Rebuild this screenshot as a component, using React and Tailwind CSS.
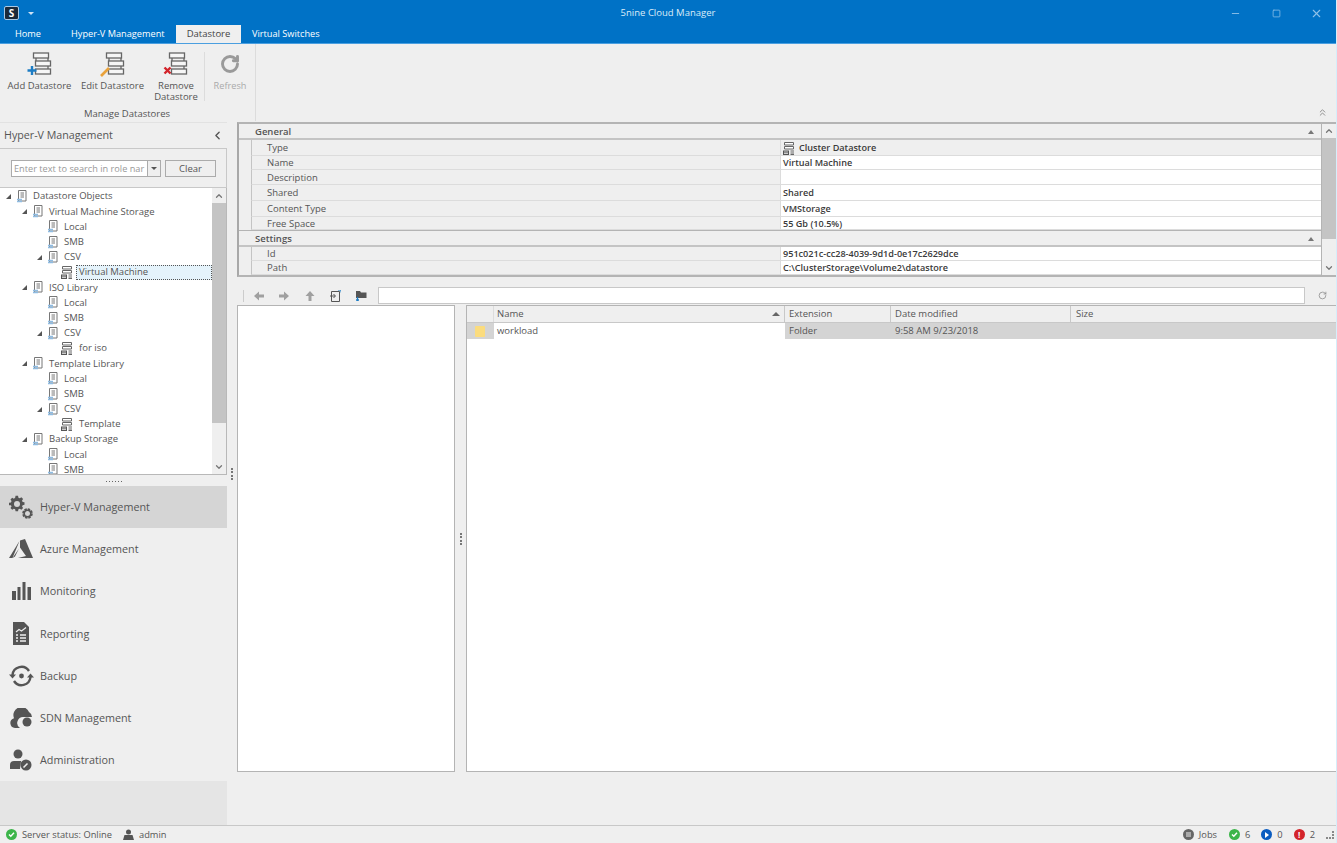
import { ChevronLeft, ChevronUp, ChevronDown, Minus, Square, X, RotateCw, ChevronsUp } from "lucide-react";

const ribbonButtons = [
    { label: "Add Datastore", width: "w-[71px]", mark: "add" },
    { label: "Edit Datastore", width: "w-[75px]", mark: "edit" },
    { label: "Remove Datastore", width: "w-[52px]", mark: "remove" },
];

const treeRows = [
    { level: 0, text: "Datastore Objects", arrow: true },
    { level: 1, text: "Virtual Machine Storage", arrow: true },
    { level: 2, text: "Local" },
    { level: 2, text: "SMB" },
    { level: 2, text: "CSV", arrow: true },
    { level: 3, text: "Virtual Machine", cluster: true, selected: true },
    { level: 1, text: "ISO Library", arrow: true },
    { level: 2, text: "Local" },
    { level: 2, text: "SMB" },
    { level: 2, text: "CSV", arrow: true },
    { level: 3, text: "for iso", cluster: true },
    { level: 1, text: "Template Library", arrow: true },
    { level: 2, text: "Local" },
    { level: 2, text: "SMB" },
    { level: 2, text: "CSV", arrow: true },
    { level: 3, text: "Template", cluster: true },
    { level: 1, text: "Backup Storage", arrow: true },
    { level: 2, text: "Local" },
    { level: 2, text: "SMB" },
];

const levelPad = ["pl-[6px]", "pl-[22px]", "pl-[37px]", "pl-[36px]"];

const navItems = [
    { label: "Hyper-V Management", icon: GearsIcon, active: true },
    { label: "Azure Management", icon: AzureIcon },
    { label: "Monitoring", icon: BarsIcon },
    { label: "Reporting", icon: ReportIcon },
    { label: "Backup", icon: BackupIcon },
    { label: "SDN Management", icon: CloudIcon },
    { label: "Administration", icon: AdminIcon },
];

const generalRows = [
    { name: "Type", value: "Cluster Datastore", grey: true, h: "h-[16px]" },
    { name: "Name", value: "Virtual Machine", h: "h-[14px]" },
    { name: "Description", value: "", h: "h-[15px]" },
    { name: "Shared", value: "Shared", h: "h-[16px]" },
    { name: "Content Type", value: "VMStorage", h: "h-[16px]" },
    { name: "Free Space", value: "55 Gb (10.5%)", h: "h-[13px]" },
];

const settingsRows = [
    { name: "Id", value: "951c021c-cc28-4039-9d1d-0e17c2629dce", h: "h-[14px]" },
    { name: "Path", value: "C:\\ClusterStorage\\Volume2\\datastore", h: "h-[14px]" },
];

function GearsIcon() {
    return (
        <svg width="24" height="24" viewBox="0 0 24 24" fill="#555">
            <path d="M8 1h3l.5 2.300 1.600.7 2-1.300 2.100 2.100-1.300 2 .7 1.600 2.300.5v3l-2.300.5-.7 1.600 1.300 2-2.100 2.100-2-1.300-1.600.7-.5 2.300H8l-.5-2.300-1.600-.7-2 1.300-2.100-2.100 1.300-2-.7-1.600L0 12.500v-3l2.400-.5.7-1.600-1.300-2 2.100-2.100 2 1.300L7.500 3.300z" transform="scale(.82)" />
            <circle cx="8" cy="9" r="3" fill="#d5d5d5" />
            <circle cx="18.500" cy="18.500" r="4" fill="none" stroke="#555" strokeWidth="2.600" strokeDasharray="2.200 .9" />
            <circle cx="18.500" cy="18.500" r="3.300" fill="none" stroke="#555" strokeWidth="1.600" />
        </svg>
    );
}

function AzureIcon() {
    return (
        <svg width="24" height="20" viewBox="0 0 24 20" fill="#555">
            <path d="M11 1.500 16 0 24 19H9l8-2-6-8.500z" />
            <path d="M10.500 2 3.500 19H0z" />
            <path d="M10 9.500 6 17.500l-2.500 1.500z" />
        </svg>
    );
}

function BarsIcon() {
    return (
        <svg width="19" height="18" viewBox="0 0 19 18" fill="#555">
            <rect x="0" y="9" width="4" height="9" />
            <rect x="5.500" y="5" width="3" height="13" />
            <rect x="10.500" y="0" width="3" height="18" />
            <rect x="15.500" y="5" width="3.500" height="13" />
        </svg>
    );
}

function ReportIcon() {
    return (
        <svg width="16" height="23" viewBox="0 0 16 23">
            <path d="M0 0h11l5 5v18H0z" fill="#555" />
            <path d="M3 10l3-2.500 2.500 1.500L13 5.500" fill="none" stroke="#efefef" strokeWidth="1.200" />
            <path d="M3 13h2M7 13h6M3 16h2M7 16h6M3 19h2M7 19h6" stroke="#efefef" strokeWidth="1.300" />
        </svg>
    );
}

function BackupIcon() {
    return (
        <svg width="25" height="22" viewBox="0 0 25 22" fill="none" stroke="#555" strokeWidth="2.400">
            <path d="M3.500 10a9 9 0 0 1 16.500-4" />
            <path d="M21.500 12a9 9 0 0 1-16.500 4" />
            <path d="M0 9.500h7L3.500 13.500z" fill="#555" stroke="none" />
            <path d="M18 12.500h7L21.500 8.500z" fill="#555" stroke="none" />
            <circle cx="12.500" cy="11" r="2.400" fill="#555" stroke="none" />
        </svg>
    );
}

function CloudIcon() {
    return (
        <svg width="23" height="20" viewBox="0 0 23 20">
            <path d="M5 20a5 5 0 0 1-1-9.800A8 8 0 0 1 19 4a6 6 0 0 1 3 5H14a6 6 0 0 0-4 11z" fill="#555" />
            <circle cx="17" cy="14" r="4.500" fill="#555" />
        </svg>
    );
}

function AdminIcon() {
    return (
        <svg width="22" height="22" viewBox="0 0 22 22">
            <circle cx="8" cy="5" r="4.500" fill="#555" />
            <path d="M0 20v-4a4 4 0 0 1 4-4h7l-1 8z" fill="#555" />
            <circle cx="16" cy="16" r="5.500" fill="#555" />
            <path d="M13.500 18.500l4-4" stroke="#efefef" strokeWidth="1.600" />
        </svg>
    );
}

function DocIcon() {
    return (
        <svg width="11" height="13" viewBox="0 0 11 13" className="shrink-0">
            <path d="M2.500 .5h7.500v10.500H2.500z" fill="#fff" stroke="#777" />
            <path d="M4.500 3h3.500M4.500 5h3.500M4.500 7h3.500" stroke="#777" />
            <path d="M1 9.500h5M1 11.500h5" stroke="#8fbce2" strokeWidth="1.400" />
        </svg>
    );
}

function ClusterIcon() {
    return (
        <svg width="12" height="13" viewBox="0 0 12 13" className="shrink-0">
            <path d="M1.500 .5h9v2.500h-9zM1.500 4.500h9V7h-9z" fill="#fff" stroke="#666" />
            <rect x="0" y="8.500" width="6" height="4.500" fill="#555" />
            <path d="M1 10h4M1 11.500h4" stroke="#ccc" />
            <path d="M7.500 9h3.500M7.500 11h3.500M7.500 12.500h3.500" stroke="#666" />
        </svg>
    );
}

function DatastoreIcon({ mark }) {
    return (
        <svg width="26" height="26" viewBox="0 0 26 26">
            <g fill="#f6f6f6" stroke="#666" strokeWidth="1.300">
                <rect x="6.500" y="1" width="15" height="5" />
                <rect x="8.500" y="9" width="15" height="5" />
                <rect x="8.500" y="17" width="15" height="5" />
            </g>
            <path d="M9 6v3M21 6v3M21 14v3" stroke="#666" strokeWidth="1.300" />
            {mark === "add" && <path d="M5 14v9M.5 18.500h9" stroke="#1c7cc4" strokeWidth="2.400" />}
            {mark === "edit" && <path d="M1 24l8-8" stroke="#e9a23b" strokeWidth="2.600" />}
            {mark === "remove" && <path d="M1.500 15.500l6 6M7.500 15.500l-6 6" stroke="#d3242b" strokeWidth="2.400" />}
        </svg>
    );
}

function ArrowIcon({ dir }) {
    const rotate = dir === "left" ? "rotate-180" : dir === "up" ? "-rotate-90" : "";
    return (
        <svg width="10" height="10" viewBox="0 0 10 10" fill="#a0a0a0" className={`shrink-0 ${rotate}`}>
            <path d="M0 3.500h5V.5L10 5 5 9.500v-3H0z" />
        </svg>
    );
}

function StatusDot({ color, children }) {
    return (
        <span className={`flex h-[11px] w-[11px] items-center justify-center rounded-full ${color}`}>
            {children}
        </span>
    );
}

function CheckMark() {
    return (
        <svg width="7" height="7" viewBox="0 0 7 7" fill="none" stroke="#fff" strokeWidth="1.400">
            <path d="M1 3.500l1.800 1.800L6 1.800" />
        </svg>
    );
}

function TreeRow({ row }) {
    return (
        <div className={`flex h-[15.2px] items-center ${levelPad[row.level]}`}>
            <span className="flex w-[10px] shrink-0 items-center">
                {row.arrow && (
                    <span className="h-0 w-0 border-b-[5px] border-l-[5px] border-b-[#555] border-l-transparent" />
                )}
            </span>
            <span className={row.level === 3 ? "ml-[15px]" : ""}>
                {row.cluster ? <ClusterIcon /> : <DocIcon />}
            </span>
            {row.selected ? (
                <span className="ml-[3px] flex h-[15px] flex-1 items-center border border-dotted border-[#555] bg-[#e5f3fb] pl-[2px]">
                    {row.text}
                </span>
            ) : (
                <span className="ml-[6px] whitespace-nowrap">{row.text}</span>
            )}
        </div>
    );
}

function PropertyGroup({ title, rows }) {
    return (
        <div>
            <div className="flex h-[16px] items-center justify-between border-b-2 border-[#c4c4c4] pl-[16px] pr-[7px] pt-[2px] font-semibold">
                {title}
                <span className="h-0 w-0 border-x-[3px] border-b-[4px] border-x-transparent border-b-[#777]" />
            </div>
            {rows.map((row) => (
                <div
                    key={row.name}
                    className={`ml-[12px] flex items-center border-b border-[#dcdcdc] border-l border-l-[#c4c4c4] ${row.h}`}
                >
                    <div className="w-[528px] shrink-0 pl-[15px] pt-[2px]">{row.name}</div>
                    <div
                        className={`flex h-full flex-1 items-center gap-[4px] border-l border-[#dcdcdc] pl-[2px] pt-[1px] text-[9.1px] font-semibold text-[#3a3a3a] ${
                            row.grey ? "" : "bg-white"
                        }`}
                    >
                        {row.grey && <ClusterIcon />}
                        {row.value}
                    </div>
                </div>
            ))}
        </div>
    );
}

export default function App() {
    return (
        <div className="flex h-[843px] w-[1337px] flex-col overflow-hidden border-r border-[#d6eefa] bg-[#efefef] font-['Open_Sans',sans-serif] text-[9.5px] text-[#555]">
            <header className="h-[44px] shrink-0 border-b border-[#4a9fe0] bg-[#0072c6] text-white">
                <div className="grid h-[26px] grid-cols-[1fr_auto_1fr] items-center">
                    <div className="flex items-center pl-[4px]">
                        <span className="flex h-[14px] w-[15px] items-center justify-center rounded-[2px] border border-[#a9c8e4] bg-[#1b2a3a] text-[10px] font-bold leading-none">
                            S
                        </span>
                        <span className="ml-[9px] h-0 w-0 border-x-[3px] border-t-[3px] border-x-transparent border-t-[#cfe3f5]" />
                    </div>
                    <div className="text-[9.5px] text-[#dcecf8]">5nine Cloud Manager</div>
                    <div className="flex items-center justify-end text-[#8fc1e8]">
                        <span className="flex w-[41px] justify-center"><Minus size={11} /></span>
                        <span className="flex w-[41px] justify-center"><Square size={9} /></span>
                        <span className="flex w-[39px] justify-center"><X size={13} /></span>
                    </div>
                </div>
                <nav className="flex h-[17px] items-end text-[9.2px] font-medium">
                    <a href="#" className="w-[60px] pb-[2px] pl-[15px]">Home</a>
                    <a href="#" className="w-[116px] pb-[2px] pl-[11px]">Hyper-V Management</a>
                    <a href="#" className="flex h-[18px] w-[65px] items-center justify-center bg-[#efefef] text-[9.5px] text-[#444]">Datastore</a>
                    <a href="#" className="pb-[2px] pl-[11px]">Virtual Switches</a>
                </nav>
            </header>

            <section className="relative flex h-[78px] shrink-0 pl-[4px]">
                <div className="mb-[1px] flex w-[252px] flex-col border-r border-[#dcdcdc]">
                    <div className="flex flex-1 pt-[8px]">
                        {ribbonButtons.map((btn) => (
                            <button key={btn.label} className={`flex flex-col items-center leading-[11px] ${btn.width}`}>
                                <DatastoreIcon mark={btn.mark} />
                                <span className="mt-[2px]">{btn.label}</span>
                            </button>
                        ))}
                        <div className="mx-[2px] mb-[6px] w-px bg-[#dcdcdc]" />
                        <button className="ml-[1px] flex w-[44px] flex-col items-center leading-[11px] text-[#aaa]">
                            <span className="flex h-[24px] items-center">
                                <RotateCw size={20} strokeWidth={3.500} className="text-[#9a9a9a]" />
                            </span>
                            <span className="mt-[4px] text-[9.2px]">Refresh</span>
                        </button>
                    </div>
                    <div className="w-[246px] text-center">Manage Datastores</div>
                </div>
                <ChevronsUp size={11} className="absolute bottom-[4px] right-[8px] text-[#888]" />
            </section>

            <main className="flex min-h-0 flex-1">
                <aside className="flex w-[227px] shrink-0 flex-col">
                    <div className="flex h-[26px] shrink-0 items-center justify-between border-t border-[#e2e2e2] pl-[4px] pr-[3px] text-[10.7px]">
                        Hyper-V Management
                        <ChevronLeft size={13} strokeWidth={2.500} />
                    </div>
                    <div className="flex h-[40px] shrink-0 items-center gap-[4px] border-y border-r border-[#c8c8c8] pl-[11px]">
                        <div className="flex h-[17px] w-[150px] border border-[#ababab] bg-white">
                            <span className="flex-1 whitespace-nowrap pl-[2px] text-[9.2px] leading-[15px] text-[#999]">
                                Enter text to search in role nar
                            </span>
                            <span className="flex w-[13px] items-center justify-center border-l border-[#ababab] bg-[#efefef]">
                                <span className="h-0 w-0 border-x-[3px] border-t-[3px] border-x-transparent border-t-[#555]" />
                            </span>
                        </div>
                        <button className="h-[17px] w-[51px] border border-[#ababab] bg-[#efefef] leading-[15px]">Clear</button>
                    </div>
                    <div className="flex h-[287px] shrink-0 overflow-hidden border-b border-r border-[#b8b8b8] bg-white">
                        <div className="min-w-0 flex-1 pt-[1px]">
                            {treeRows.map((row, i) => (
                                <TreeRow key={i} row={row} />
                            ))}
                        </div>
                        <div className="flex w-[14px] shrink-0 flex-col bg-[#efefef] text-[#777]">
                            <div className="flex h-[15px] items-center justify-center"><ChevronUp size={10} strokeWidth={3} /></div>
                            <div className="h-[220px] bg-[#c4c4c4]" />
                            <div className="flex-1" />
                            <div className="flex h-[15px] items-center justify-center"><ChevronDown size={10} strokeWidth={3} /></div>
                        </div>
                    </div>
                    <div className="flex h-[11px] shrink-0 items-center justify-center gap-[2px] pt-[2px]">
                        {[0, 1, 2, 3, 4, 5].map((dot) => (
                            <span key={dot} className="h-px w-px bg-[#666]" />
                        ))}
                    </div>
                    <nav className="shrink-0">
                        {navItems.map((item) => {
                            const Icon = item.icon;
                            return (
                                <a
                                    key={item.label}
                                    href="#"
                                    className={`flex h-[42.2px] items-center text-[10.8px] ${item.active ? "bg-[#d5d5d5]" : ""}`}
                                >
                                    <span className="flex w-[40px] shrink-0 items-center justify-center pl-[4px] pr-[2px]">
                                        <Icon />
                                    </span>
                                    {item.label}
                                </a>
                            );
                        })}
                    </nav>
                    <div className="flex-1 bg-[#e5e5e5]" />
                </aside>

                <div className="flex w-[10px] shrink-0 items-center justify-center">
                    <span className="h-[12px] border-l-2 border-dotted border-[#777]" />
                </div>

                <div className="flex min-w-0 flex-1 flex-col">
                    <section className="flex h-[155px] shrink-0 border-2 border-r-0 border-[#b4b4b4] border-l-[#a8a8a8]">
                        <div className="min-w-0 flex-1 overflow-hidden">
                            <PropertyGroup title="General" rows={generalRows} />
                            <div className="border-t border-[#b4b4b4]">
                                <PropertyGroup title="Settings" rows={settingsRows} />
                            </div>
                        </div>
                        <div className="flex w-[15px] shrink-0 flex-col border-l border-[#b4b4b4] text-[#777]">
                            <div className="flex h-[14px] items-center justify-center"><ChevronUp size={10} strokeWidth={3} /></div>
                            <div className="h-[101px] bg-[#c4c4c4]" />
                            <div className="flex-1" />
                            <div className="flex h-[15px] items-center justify-center"><ChevronDown size={10} strokeWidth={3} /></div>
                        </div>
                    </section>

                    <div className="flex h-[28px] shrink-0 items-end pb-[1px]">
                        <div className="flex h-[16px] w-[141px] items-center gap-[15.500px] pl-[6px]">
                            <span className="-mr-[6px] h-[12px] border-l border-[#ccc]" />
                            <ArrowIcon dir="left" />
                            <ArrowIcon dir="right" />
                            <ArrowIcon dir="up" />
                            <svg width="11" height="12" viewBox="0 0 11 12" fill="none" stroke="#555" className="shrink-0">
                                <path d="M1.500 1.500h8v10h-8zM0 6h5M3.500 4l2 2-2 2" />
                                <path d="M8 0h3v2.500" stroke="#1c7cc4" />
                            </svg>
                            <svg width="12" height="12" viewBox="0 0 12 12" fill="#555" className="-ml-[2px] shrink-0">
                                <path d="M1 1h4l1 1.500h5.500V8H1z" />
                                <path d="M2.500 7v4M1 10h3" stroke="#1c7cc4" strokeWidth="1.300" />
                            </svg>
                        </div>
                        <div className="h-[17px] w-[927px] border border-[#c8c8c8] bg-white" />
                        <RotateCw size={9} className="mb-[4px] ml-[13px] text-[#888]" />
                    </div>

                    <div className="flex h-[467px] shrink-0">
                        <div className="w-[218px] border border-[#b4b4b4] bg-white" />
                        <div className="flex w-[11px] items-center justify-center">
                            <span className="h-[12px] border-l-2 border-dotted border-[#777]" />
                        </div>
                        <div className="flex min-w-0 flex-1 flex-col border-y border-l border-[#b4b4b4] bg-white">
                            <div className="flex h-[17px] items-center border-b border-[#c8c8c8] bg-[#efefef]">
                                <div className="h-full w-[27px] border-r border-[#dcdcdc]" />
                                <div className="flex h-full w-[291px] items-center justify-between border-r border-[#c8c8c8] pl-[3px] pr-[4px]">
                                    Name
                                    <span className="h-0 w-0 border-x-[4px] border-b-[4px] border-x-transparent border-b-[#666]" />
                                </div>
                                <div className="flex h-full w-[106px] items-center border-r border-[#c8c8c8] pl-[4px]">Extension</div>
                                <div className="flex h-full w-[180px] items-center border-r border-[#c8c8c8] pl-[4px]">Date modified</div>
                                <div className="pl-[5px]">Size</div>
                            </div>
                            <div className="flex h-[16px] items-center bg-[#d4d4d4]">
                                <div className="flex h-full w-[27px] items-center pl-[8px]">
                                    <span className="h-[11px] w-[10px] rounded-[1px] bg-[#fbdc7e]" />
                                </div>
                                <div className="flex h-full w-[291px] items-center bg-white pl-[3px]">workload</div>
                                <div className="w-[106px] pl-[4px]">Folder</div>
                                <div className="w-[180px] pl-[4px]">9:58 AM 9/23/2018</div>
                            </div>
                        </div>
                    </div>
                    <div className="flex-1" />
                </div>
            </main>

            <footer className="flex h-[18px] shrink-0 items-center justify-between border-t border-[#c8c8c8] pl-[6px] pr-[2px] text-[9.3px]">
                <div className="flex items-center">
                    <StatusDot color="bg-[#3cb54a]"><CheckMark /></StatusDot>
                    <span className="ml-[5px]">Server status: Online</span>
                    <svg width="11" height="11" viewBox="0 0 11 11" fill="#555" className="ml-[11px]">
                        <circle cx="5.500" cy="3" r="2.500" />
                        <path d="M0 11l1.500-5h8L11 11z" />
                    </svg>
                    <span className="ml-[5px]">admin</span>
                </div>
                <div className="flex items-center">
                    <StatusDot color="bg-[#666]"><span className="h-[5px] w-[5px] bg-[#aaa]" /></StatusDot>
                    <span className="ml-[5px]">Jobs</span>
                    <span className="ml-[12px]"><StatusDot color="bg-[#3cb54a]"><CheckMark /></StatusDot></span>
                    <span className="ml-[5px]">6</span>
                    <span className="ml-[11px]"><StatusDot color="bg-[#0a5cc0]"><span className="h-0 w-0 border-y-[3px] border-l-[4px] border-y-transparent border-l-white" /></StatusDot></span>
                    <span className="ml-[5px]">0</span>
                    <span className="ml-[11px]"><StatusDot color="bg-[#d3242b]"><span className="text-[8px] font-bold leading-none text-white">!</span></StatusDot></span>
                    <span className="ml-[5px]">2</span>
                    <span className="ml-[11px] h-[8px] w-[8px] border-b-2 border-r-2 border-dotted border-[#888]" />
                </div>
            </footer>
        </div>
    );
}
